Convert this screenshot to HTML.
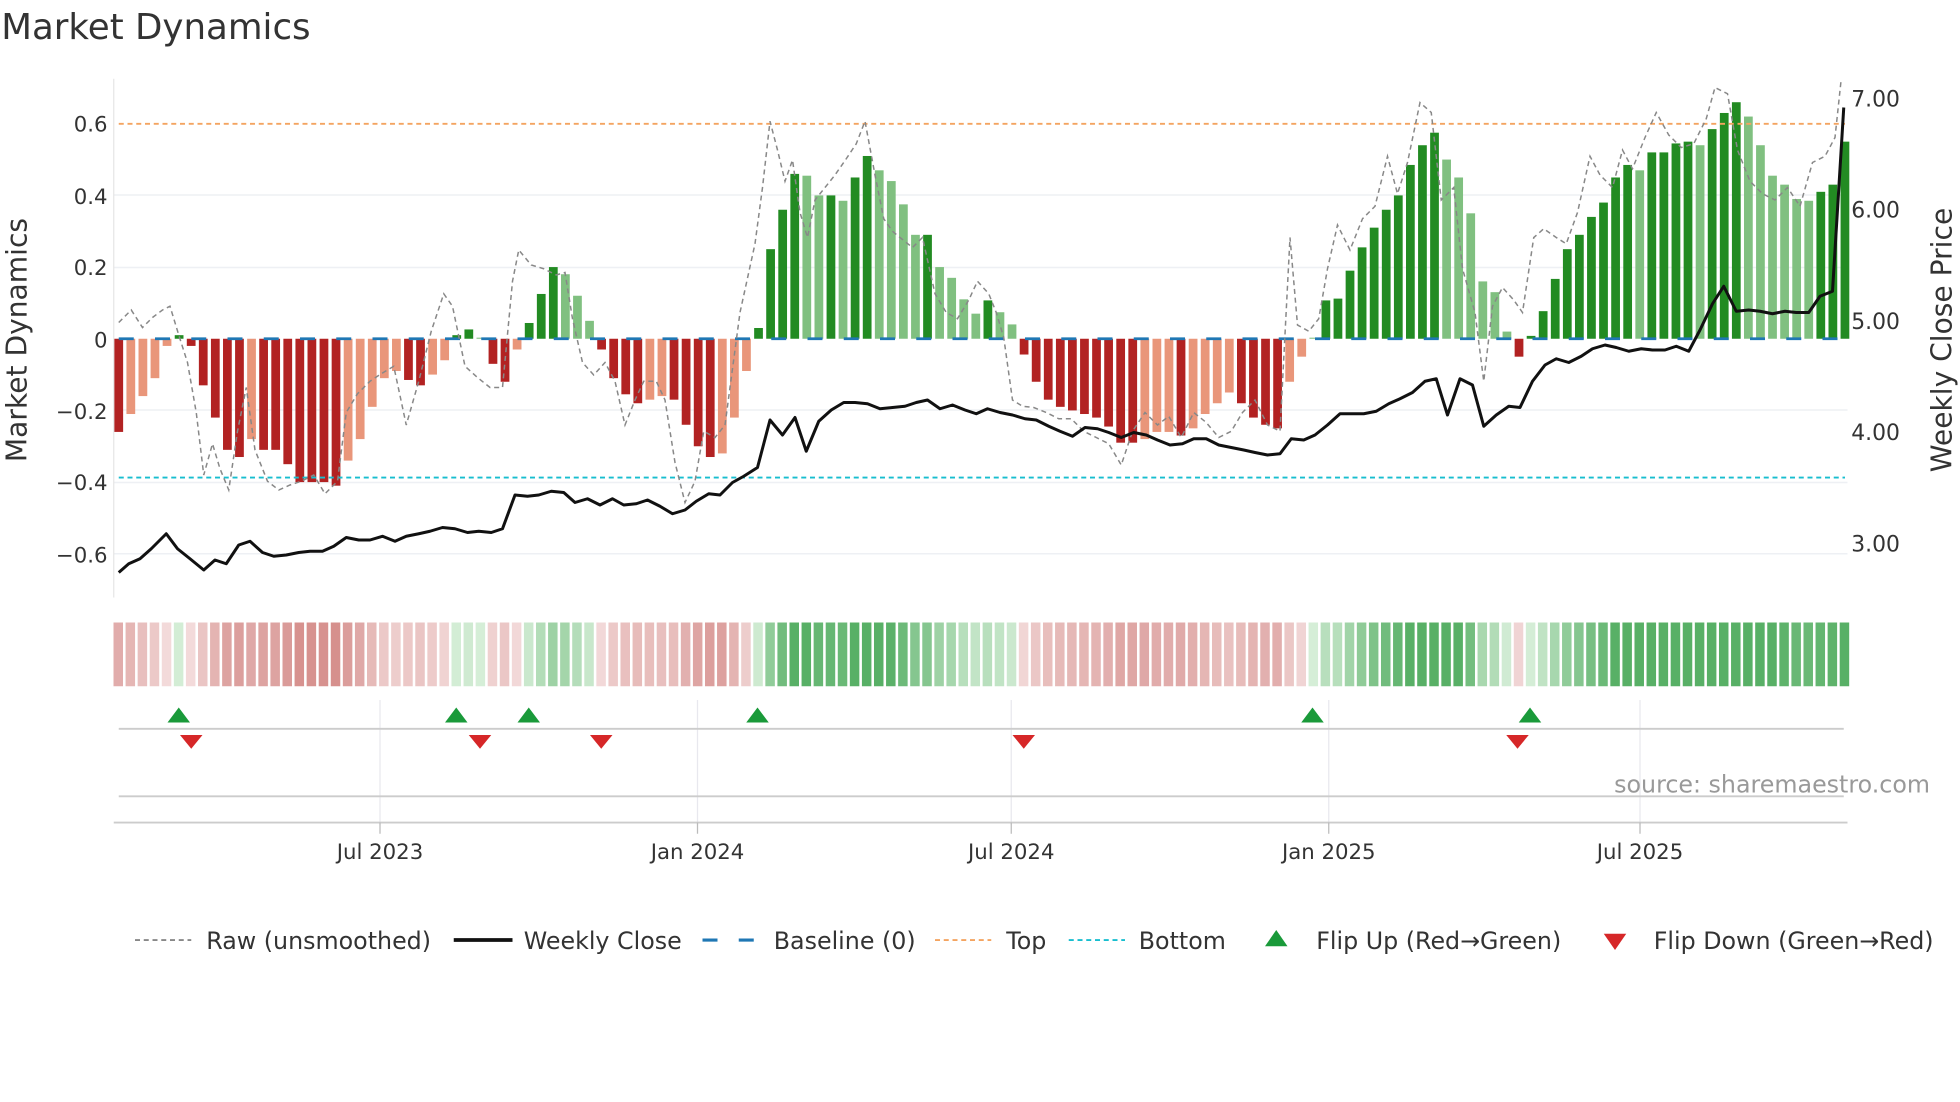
<!DOCTYPE html>
<html><head><meta charset="utf-8"><style>
html,body{margin:0;padding:0;background:#fff;}
svg{display:block;font-family:"DejaVu Sans","Liberation Sans",sans-serif;}
</style></head><body>
<svg id="s" width="1960" height="1102" viewBox="0 0 1568 881.6" preserveAspectRatio="none" xmlns="http://www.w3.org/2000/svg">
<rect width="1568" height="882" fill="#fff"/>
<text x="1" y="31" font-size="28.5" fill="#333">Market Dynamics</text>
<g stroke="#eef0f4" stroke-width="1.2">
<line x1="91" x2="1478" y1="156" y2="156"/><line x1="91" x2="1478" y1="214" y2="214"/>
<line x1="91" x2="1478" y1="328" y2="328"/><line x1="91" x2="1478" y1="386" y2="386"/>
<line x1="91" x2="1478" y1="443" y2="443"/>
</g>
<line x1="91" x2="91" y1="63" y2="478" stroke="#e6e6e6"/>
<g font-size="17" fill="#333" text-anchor="end">
<text x="86" y="105">0.6</text><text x="86" y="163">0.4</text><text x="86" y="220">0.2</text>
<text x="86" y="278">0</text><text x="86" y="335">−0.2</text><text x="86" y="392">−0.4</text><text x="86" y="450">−0.6</text>
</g>
<g font-size="17.5" fill="#333">
<text x="1481" y="85">7.00</text><text x="1481" y="174">6.00</text><text x="1481" y="263">5.00</text>
<text x="1481" y="352">4.00</text><text x="1481" y="441">3.00</text>
</g>
<text transform="translate(21,272) rotate(-90)" font-size="22.5" fill="#333" text-anchor="middle">Market Dynamics</text>
<text transform="translate(1561,272) rotate(-90)" font-size="22.5" fill="#333" text-anchor="middle">Weekly Close Price</text>
<g id="bars"></g>
<line x1="95" x2="1476" y1="271" y2="271" stroke="#1f77b4" stroke-width="2.2" stroke-dasharray="12,17"/>
<line x1="95" x2="1476" y1="99" y2="99" stroke="#f4a460" stroke-width="1.5" stroke-dasharray="4,3"/>
<line x1="95" x2="1476" y1="382" y2="382" stroke="#17becf" stroke-width="1.5" stroke-dasharray="4,3"/>
<polyline id="raw" fill="none" stroke="#888" stroke-width="1.2" stroke-dasharray="4,3"/>
<polyline id="price" fill="none" stroke="#111" stroke-width="2.4" stroke-linejoin="round"/>
<g id="heat"></g>
<g stroke="#e8e8ee" stroke-width="1">
<line x1="304" x2="304" y1="560" y2="660"/><line x1="558" x2="558" y1="560" y2="660"/>
<line x1="809" x2="809" y1="560" y2="660"/><line x1="1063" x2="1063" y1="560" y2="660"/>
<line x1="1312" x2="1312" y1="560" y2="660"/>
</g>
<line x1="95" x2="1475" y1="583" y2="583" stroke="#ccc" stroke-width="1.5"/>
<line x1="95" x2="1475" y1="637" y2="637" stroke="#ccc" stroke-width="1.5"/>
<line x1="91" x2="1478" y1="658" y2="658" stroke="#ccc" stroke-width="1.5"/>
<g stroke="#bbb"><line x1="304" x2="304" y1="658" y2="667"/><line x1="558" x2="558" y1="658" y2="667"/><line x1="809" x2="809" y1="658" y2="667"/><line x1="1063" x2="1063" y1="658" y2="667"/><line x1="1312" x2="1312" y1="658" y2="667"/></g>
<g id="flips"></g>
<g font-size="17" fill="#333" text-anchor="middle">
<text x="304" y="687">Jul 2023</text><text x="558" y="687">Jan 2024</text><text x="809" y="687">Jul 2024</text>
<text x="1063" y="687">Jan 2025</text><text x="1312" y="687">Jul 2025</text>
</g>
<text x="1544" y="634" font-size="19" fill="#999" text-anchor="end">source: sharemaestro.com</text>
<g font-size="19" fill="#333">
<line x1="108" x2="153" y1="752" y2="752" stroke="#888" stroke-width="1.5" stroke-dasharray="4,3"/>
<text x="165" y="759">Raw (unsmoothed)</text>
<line x1="363" x2="410" y1="752" y2="752" stroke="#111" stroke-width="3"/>
<text x="419" y="759">Weekly Close</text>
<line x1="562" x2="607" y1="752" y2="752" stroke="#1f77b4" stroke-width="2.5" stroke-dasharray="12,17"/>
<text x="619" y="759">Baseline (0)</text>
<line x1="748" x2="793" y1="752" y2="752" stroke="#f4a460" stroke-width="1.5" stroke-dasharray="4,3"/>
<text x="805" y="759">Top</text>
<line x1="855" x2="900" y1="752" y2="752" stroke="#17becf" stroke-width="1.5" stroke-dasharray="4,3"/>
<text x="911" y="759">Bottom</text>
<polygon points="1012,757 1030,757 1021,744" fill="#1a9a3a"/>
<text x="1053" y="759">Flip Up (Red→Green)</text>
<polygon points="1283,747 1301,747 1292,760" fill="#d62728"/>
<text x="1323" y="759">Flip Down (Green→Red)</text>
</g>
</svg>
<script>
var V=[[-0.26,1],[-0.21,0],[-0.16,0],[-0.11,0],[-0.02,0],[0.01,1],[-0.02,1],[-0.13,1],[-0.22,1],[-0.31,1],[-0.33,1],[-0.28,0],[-0.31,1],[-0.31,1],[-0.35,1],[-0.4,1],[-0.4,1],[-0.4,1],[-0.41,1],[-0.34,0],[-0.28,0],[-0.19,0],[-0.11,0],[-0.09,0],[-0.115,1],[-0.13,1],[-0.1,0],[-0.06,0],[0.01,1],[0.026,1],[0.003,0],[-0.07,1],[-0.12,1],[-0.03,0],[0.044,1],[0.125,1],[0.2,1],[0.18,0],[0.12,0],[0.05,0],[-0.03,1],[-0.11,1],[-0.155,1],[-0.18,1],[-0.17,0],[-0.16,0],[-0.17,1],[-0.24,1],[-0.3,1],[-0.33,1],[-0.32,0],[-0.22,0],[-0.09,0],[0.03,1],[0.25,1],[0.36,1],[0.46,1],[0.455,0],[0.4,0],[0.4,1],[0.385,0],[0.45,1],[0.51,1],[0.47,0],[0.44,0],[0.375,0],[0.29,0],[0.29,1],[0.2,0],[0.17,0],[0.11,0],[0.07,0],[0.107,1],[0.074,0],[0.04,0],[-0.044,1],[-0.12,1],[-0.17,1],[-0.19,1],[-0.2,1],[-0.21,1],[-0.22,1],[-0.245,1],[-0.29,1],[-0.29,1],[-0.28,0],[-0.26,0],[-0.26,0],[-0.27,1],[-0.25,0],[-0.21,0],[-0.18,0],[-0.15,0],[-0.18,1],[-0.22,1],[-0.24,1],[-0.25,1],[-0.12,0],[-0.05,0],[0.003,0],[0.107,1],[0.112,1],[0.19,1],[0.255,1],[0.31,1],[0.36,1],[0.4,1],[0.485,1],[0.54,1],[0.575,1],[0.5,0],[0.45,0],[0.35,0],[0.16,0],[0.13,0],[0.02,0],[-0.05,1],[0.008,1],[0.077,1],[0.167,1],[0.25,1],[0.29,1],[0.34,1],[0.38,1],[0.45,1],[0.485,1],[0.47,0],[0.52,1],[0.52,1],[0.545,1],[0.55,1],[0.54,0],[0.585,1],[0.63,1],[0.66,1],[0.62,0],[0.54,0],[0.455,0],[0.43,0],[0.39,0],[0.385,0],[0.41,1],[0.43,1],[0.55,1]];
var ns="http://www.w3.org/2000/svg",b=document.getElementById('bars'),h=document.getElementById('heat');
function R(g,x,y,w,hh,f){var r=document.createElementNS(ns,'rect');r.setAttribute('x',x);r.setAttribute('y',y);r.setAttribute('width',w);r.setAttribute('height',hh);r.setAttribute('fill',f);g.appendChild(r);}
function mix(a,c,t){return 'rgb('+a.map(function(v,i){return Math.round(v+(c[i]-v)*t)}).join(',')+')';}
V.forEach(function(d,i){var x=95+i*9.657,v=d[0],y=271-286.7*v;
var f=v>=0?(d[1]?'#228b22':'#80c080'):(d[1]?'#b22222':'#e9967a');
R(b,x-3.5,Math.min(y,271),7,Math.max(Math.abs(271-y),0.5),f);
var t=Math.min(Math.abs(v)/0.45,1);
var c=v>=0?mix([214,238,216],[88,176,102],t):mix([244,222,222],[211,136,133],t);
R(h,x-4.2,498,7.6,51,c);});
var raw=[[95,258],[105,248],[114,262],[122,254],[130,248],[136,245],[143,268],[150,290],[157,330],[163,380],[170,355],[176,375],[183,392],[190,345],[197,310],[204,360],[214,385],[223,392],[232,388],[241,385],[251,380],[260,395],[270,385],[277,330],[286,315],[296,305],[305,299],[315,293],[325,340],[335,305],[345,265],[355,235],[362,245],[372,293],[382,302],[392,310],[402,310],[410,225],[415,200],[425,212],[435,215],[445,220],[452,218],[458,255],[466,290],[475,300],[484,290],[492,305],[500,340],[508,320],[515,305],[525,305],[532,320],[540,370],[548,402],[556,385],[563,345],[572,350],[580,340],[592,250],[604,195],[610,150],[616,97],[622,120],[628,145],[634,128],[640,170],[646,190],[652,160],[660,150],[668,140],[677,127],[685,115],[692,97],[700,140],[707,175],[714,185],[720,190],[730,198],[738,190],[748,235],[757,250],[766,255],[775,240],[782,225],[791,235],[797,250],[803,270],[810,320],[818,325],[827,326],[837,330],[847,335],[857,335],[867,345],[877,350],[887,355],[897,372],[906,345],[916,330],[926,340],[935,333],[945,350],[955,330],[965,338],[975,350],[985,345],[994,330],[1004,320],[1014,340],[1024,345],[1032,190],[1038,260],[1047,265],[1055,255],[1062,215],[1070,180],[1080,200],[1090,175],[1100,165],[1110,125],[1118,155],[1126,130],[1136,82],[1145,90],[1153,160],[1163,150],[1170,215],[1180,250],[1187,305],[1194,245],[1202,230],[1211,240],[1218,250],[1227,190],[1235,183],[1245,190],[1253,195],[1262,170],[1272,125],[1280,140],[1290,150],[1298,120],[1306,135],[1316,110],[1325,90],[1335,108],[1345,118],[1355,115],[1365,95],[1372,70],[1382,75],[1390,120],[1400,145],[1410,155],[1420,160],[1430,150],[1440,165],[1450,130],[1460,125],[1468,110],[1473,63]];
var pr=[[95,458],[103,451],[112,447],[121,439],[133,427],[142,439],[152,447],[163,456],[172,448],[181,451],[191,436],[200,433],[210,442],[219,445],[229,444],[239,442],[248,441],[258,441],[267,437],[277,430],[287,432],[296,432],[306,429],[316,433],[325,429],[335,427],[344,425],[354,422],[364,423],[374,426],[383,425],[393,426],[402,423],[412,396],[422,397],[431,396],[441,393],[451,394],[460,402],[470,399],[480,404],[490,399],[499,404],[509,403],[518,400],[528,405],[538,411],[548,408],[557,401],[567,395],[576,396],[586,386],[595,381],[606,374],[616,336],[626,348],[636,334],[645,361],[655,337],[665,328],[675,322],[684,322],[694,323],[704,327],[714,326],[724,325],[733,322],[742,320],[752,327],[762,324],[772,328],[781,331],[790,327],[800,330],[810,332],[820,335],[829,336],[839,341],[848,345],[858,349],[868,342],[878,343],[887,346],[897,350],[907,346],[917,348],[926,352],[936,356],[946,355],[955,351],[965,351],[975,356],[985,358],[995,360],[1004,362],[1014,364],[1024,363],[1033,351],[1043,352],[1052,348],[1062,340],[1072,331],[1082,331],[1091,331],[1101,329],[1111,323],[1120,319],[1130,314],[1140,305],[1149,303],[1158,332],[1168,303],[1178,308],[1187,341],[1197,332],[1207,325],[1216,326],[1226,305],[1236,292],[1245,287],[1255,290],[1265,285],[1274,279],[1284,276],[1293,278],[1303,281],[1313,279],[1322,280],[1332,280],[1341,277],[1351,281],[1360,264],[1370,243],[1379,229],[1389,249],[1399,248],[1408,249],[1418,251],[1428,249],[1437,250],[1447,250],[1456,237],[1466,233],[1475,86]];
document.getElementById('raw').setAttribute('points',raw.join(' '));
document.getElementById('price').setAttribute('points',pr.join(' '));
var fl=document.getElementById('flips');
[143,365,423,606,1050,1224].forEach(function(x){var p=document.createElementNS(ns,'polygon');p.setAttribute('points',(x-9)+',578 '+(x+9)+',578 '+x+',566');p.setAttribute('fill','#1a9a3a');fl.appendChild(p);});
[153,384,481,819,1214].forEach(function(x){var p=document.createElementNS(ns,'polygon');p.setAttribute('points',(x-9)+',588 '+(x+9)+',588 '+x+',599');p.setAttribute('fill','#d62728');fl.appendChild(p);});
</script>
</body></html>
